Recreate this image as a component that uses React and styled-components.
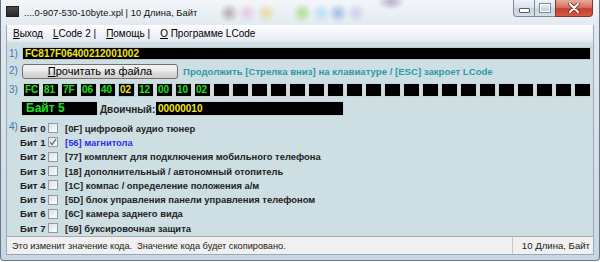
import React from "react";
import styled, { createGlobalStyle } from "styled-components";

const GlobalStyle = createGlobalStyle`
  html, body {
    margin: 0;
    padding: 0;
    background: #ffffff;
  }
  body {
    font-family: "Liberation Sans", Arial, sans-serif;
  }
`;

const bytes = ["FC", "81", "7F", "06", "40", "02", "12", "00", "10", "02"];
const selectedByte = 5;

const bits = [
  { code: "0F", text: "цифровой аудио тюнер" },
  { code: "56", text: "магнитола", on: true },
  { code: "77", text: "комплект для подключения мобильного телефона" },
  { code: "18", text: "дополнительный / автономный отопитель" },
  { code: "1C", text: "компас / определение положения а/м" },
  { code: "5D", text: "блок управления панели управления телефоном" },
  { code: "6C", text: "камера заднего вида" },
  { code: "59", text: "буксировочная защита" },
];

const App = () => {
  const cells = Array.from({ length: 30 }, (_, i) => bytes[i] || "");
  return (
    <>
      <GlobalStyle />
      <Window>
        <TitleBar>
          <AppIcon />
          <Title>....0-907-530-10byte.xpl | 10 Длина, Байт</Title>
          <Caption>
            <CapButton>
              <MinGlyph />
            </CapButton>
            <CapButton>
              <MaxGlyph />
            </CapButton>
            <CapButton close>
              <svg width="14" height="10" viewBox="0 0 14 10">
                <path d="M3 1 L11 9 M11 1 L3 9" stroke="#5a2a26" strokeWidth="3.4" strokeLinecap="round" />
                <path d="M3 1 L11 9 M11 1 L3 9" stroke="#ffffff" strokeWidth="2" strokeLinecap="round" />
              </svg>
            </CapButton>
          </Caption>
        </TitleBar>
        <Client>
          <MenuBar>
            <MenuItem><u>В</u>ыход</MenuItem>
            <MenuItem><u>L</u>Code 2 |</MenuItem>
            <MenuItem><u>П</u>омощь |</MenuItem>
            <MenuItem><u>О</u> Программе LCode</MenuItem>
          </MenuBar>
          <Content>
            <Row top={4} h={13}>
              <StepLabel>1)</StepLabel>
              <HexField>FC817F06400212001002</HexField>
            </Row>
            <Row top={3} h={16}>
              <StepLabel>2)</StepLabel>
              <Inline>
                <ReadButton><u>П</u>рочитать из файла</ReadButton>
                <Hint>Продолжить [Стрелка вниз] на клавиатуре / [ESC] закроет LCode</Hint>
              </Inline>
            </Row>
            <Row top={4} h={14}>
              <StepLabel>3)</StepLabel>
              <Cells>
                {cells.map((b, i) => (
                  <Cell key={i} selected={i === selectedByte}>{b}</Cell>
                ))}
              </Cells>
            </Row>
            <Row top={4} h={15}>
              <span />
              <Inline>
                <ByteBox>Байт 5</ByteBox>
                <BinLabel>Двоичный:</BinLabel>
                <BinField>00000010</BinField>
              </Inline>
            </Row>
            <BitsBlock>
              <BitsLabel>4)</BitsLabel>
              <BitList>
                {bits.map((b, i) => (
                  <BitRow key={i}>
                    <BitName>Бит {i}</BitName>
                    <Check>
                      {b.on && (
                        <svg width="8" height="8" viewBox="0 0 8 8">
                          <path d="M1 4 L3 6.5 L7 1" fill="none" stroke="#4a5a70" strokeWidth="1.2" />
                        </svg>
                      )}
                    </Check>
                    <BitText on={b.on}>[{b.code}] {b.text}</BitText>
                  </BitRow>
                ))}
              </BitList>
            </BitsBlock>
          </Content>
          <StatusBar>
            <StatusMain>Это изменит значение кода.&nbsp; Значение кода будет скопировано.</StatusMain>
            <StatusPane>10 Длина, Байт</StatusPane>
          </StatusBar>
        </Client>
      </Window>
    </>
  );
};

const Window = styled.div`
  width: 600px;
  height: 261px;
  box-sizing: border-box;
  display: flex;
  flex-direction: column;
  padding: 0 5px 5px;
  border: 1px solid #6b7682;
  border-top: none;
  border-radius: 0 0 4px 4px;
  background: linear-gradient(#e3ebf2, #c9d7e3);
`;

const TitleBar = styled.div`
  flex: none;
  height: 25px;
  margin: 0 -5px;
  padding: 0 6px 0 5px;
  display: flex;
  align-items: flex-start;
  background:
    radial-gradient(circle 10px at 228px 13px, rgba(130, 95, 85, 0.45), rgba(130, 95, 85, 0)),
    radial-gradient(circle 10px at 246px 13px, rgba(225, 160, 210, 0.5), rgba(225, 160, 210, 0)),
    radial-gradient(circle 10px at 265px 13px, rgba(230, 200, 80, 0.5), rgba(230, 200, 80, 0)),
    radial-gradient(circle 10px at 301px 13px, rgba(120, 210, 60, 0.55), rgba(120, 210, 60, 0)),
    radial-gradient(circle 10px at 320px 13px, rgba(140, 215, 240, 0.55), rgba(140, 215, 240, 0)),
    radial-gradient(circle 10px at 337px 13px, rgba(90, 140, 220, 0.5), rgba(90, 140, 220, 0)),
    radial-gradient(circle 10px at 355px 13px, rgba(180, 175, 240, 0.5), rgba(180, 175, 240, 0)),
    radial-gradient(ellipse 14px 8px at 390px 2px, rgba(110, 90, 140, 0.45), rgba(110, 90, 140, 0)),
    linear-gradient(#f3f6f9, #e2eaf1);
`;

const AppIcon = styled.div`
  flex: none;
  width: 13px;
  height: 11px;
  margin-top: 6px;
  box-sizing: border-box;
  border: 1px solid #1e1e1e;
  background: linear-gradient(#4a4a4a, #262626);
`;

const Title = styled.div`
  margin: 6px 0 0 5px;
  font-size: 9.4px;
  line-height: 14px;
  color: #111111;
  white-space: nowrap;
`;

const Caption = styled.div`
  margin-left: auto;
  display: flex;
`;

const CapButton = styled.div`
  width: ${(p) => (p.close ? 38 : 22)}px;
  height: 17px;
  box-sizing: border-box;
  display: flex;
  align-items: center;
  justify-content: center;
  border: 1px solid ${(p) => (p.close ? "#7a3a32" : "#7d8a98")};
  border-top: none;
  margin-left: -1px;
  border-radius: ${(p) => (p.close ? "0 0 4px 0" : "0")};
  background: ${(p) =>
    p.close
      ? "linear-gradient(#e9a99d, #d4725f 45%, #c2402c 55%, #d45a44)"
      : "linear-gradient(#eef3f8, #dbe4ee 45%, #c7d3e0 55%, #d6e0ea)"};
  &:first-child {
    border-radius: 0 0 0 4px;
  }
`;

const MinGlyph = styled.div`
  width: 9px;
  height: 3px;
  margin-top: 5px;
  background: #ffffff;
  border: 1px solid #535e6a;
  border-radius: 1px;
`;

const MaxGlyph = styled.div`
  width: 8px;
  height: 6px;
  border: 1px solid #ffffff;
  outline: 1px solid #7d8998;
`;

const Client = styled.div`
  flex: 1;
  display: flex;
  flex-direction: column;
  border: 1px solid #9aa9b7;
  border-top: none;
  background: #cddfe2;
`;

const MenuBar = styled.div`
  flex: none;
  height: 17px;
  display: flex;
  align-items: center;
  padding-left: 1px;
  background: linear-gradient(#fdfdfe, #eef2f8 60%, #e3e9f1);
  border-bottom: 1px solid #d6dde6;
`;

const MenuItem = styled.div`
  padding: 0 5px;
  font-size: 10px;
  color: #000000;
  white-space: nowrap;
  u {
    text-underline-offset: 1px;
  }
`;

const Content = styled.div`
  flex: 1;
  display: flex;
  flex-direction: column;
  padding: 0 2px;
`;

const Row = styled.div`
  display: grid;
  grid-template-columns: 13px 1fr;
  align-items: center;
  margin-top: ${(p) => p.top}px;
  height: ${(p) => p.h}px;
`;

const StepLabel = styled.div`
  font-size: 10px;
  color: #3a78bc;
  line-height: 10px;
`;

const HexField = styled.div`
  height: 13px;
  box-sizing: border-box;
  background: #000000;
  border: 1px solid #bfc8cc;
  padding-left: 2px;
  font-size: 10px;
  font-weight: bold;
  line-height: 11px;
  color: #f2e41e;
`;

const Inline = styled.div`
  display: flex;
  align-items: center;
  height: 100%;
`;

const ReadButton = styled.div`
  flex: none;
  width: 156px;
  height: 15px;
  box-sizing: border-box;
  border: 1px solid #707070;
  border-radius: 3px;
  background: linear-gradient(#f2f2f2, #ebebeb 48%, #dddddd 52%, #cfcfcf);
  font-size: 11px;
  line-height: 13px;
  text-align: center;
  color: #000000;
`;

const Hint = styled.div`
  margin-left: 5px;
  font-size: 9.6px;
  font-weight: bold;
  color: #2f9aa6;
  white-space: nowrap;
`;

const Cells = styled.div`
  display: flex;
  gap: 2px;
  margin-left: 1px;
  height: 14px;
`;

const Cell = styled.div`
  flex: 1;
  box-sizing: border-box;
  background: #000000;
  border: 1px solid ${(p) => (p.selected ? "#a9c8dc" : "#cfd3d4")};
  font-size: 10px;
  font-weight: bold;
  line-height: 12px;
  padding-left: 1px;
  color: ${(p) => (p.selected ? "#f2e41e" : "#1fe01f")};
`;

const ByteBox = styled.div`
  flex: none;
  width: 77px;
  height: 15px;
  margin-left: -1px;
  box-sizing: border-box;
  background: #000000;
  border: 1px solid #cfd3d4;
  padding-left: 4px;
  font-size: 12px;
  font-weight: bold;
  line-height: 13px;
  color: #1fe01f;
`;

const BinLabel = styled.div`
  margin: 2px 0 0 2px;
  width: 55px;
  font-size: 10px;
  font-weight: bold;
  color: #222222;
`;

const BinField = styled.div`
  width: 189px;
  height: 15px;
  box-sizing: border-box;
  background: #000000;
  border: 1px solid #cfd3d4;
  padding-left: 2px;
  font-size: 10px;
  font-weight: bold;
  line-height: 13px;
  color: #f2e41e;
`;

const BitsBlock = styled.div`
  display: flex;
  margin-top: 5px;
`;

const BitsLabel = styled(StepLabel)`
  width: 11px;
  margin-top: 1px;
`;

const BitList = styled.div`
  display: flex;
  flex-direction: column;
`;

const BitRow = styled.div`
  height: 14.3px;
  display: flex;
  align-items: center;
`;

const BitName = styled.div`
  width: 25px;
  font-size: 9.6px;
  font-weight: bold;
  color: #222222;
  white-space: nowrap;
`;

const Check = styled.div`
  width: 10px;
  height: 10px;
  margin-left: 3px;
  box-sizing: border-box;
  border: 1px solid #8e9aa4;
  background: linear-gradient(135deg, #dde2e6, #fbfcfc);
  display: flex;
  align-items: center;
  justify-content: center;
`;

const BitText = styled.div`
  margin-left: 7px;
  font-size: 9.4px;
  font-weight: bold;
  color: ${(p) => (p.on ? "#2d2ef0" : "#222222")};
  white-space: nowrap;
`;

const StatusBar = styled.div`
  flex: none;
  height: 17px;
  display: flex;
  align-items: center;
  background: #f0f0f0;
  border-top: 1px solid #a8acb0;
`;

const StatusMain = styled.div`
  flex: 1;
  padding-left: 5px;
  font-size: 9.2px;
  color: #1a1a1a;
  white-space: nowrap;
`;

const StatusPane = styled.div`
  height: 100%;
  display: flex;
  align-items: center;
  padding: 0 3px 0 9px;
  border-left: 1px solid #c4c6c8;
  font-size: 9.6px;
  color: #1a1a1a;
  white-space: nowrap;
`;

export default App;
